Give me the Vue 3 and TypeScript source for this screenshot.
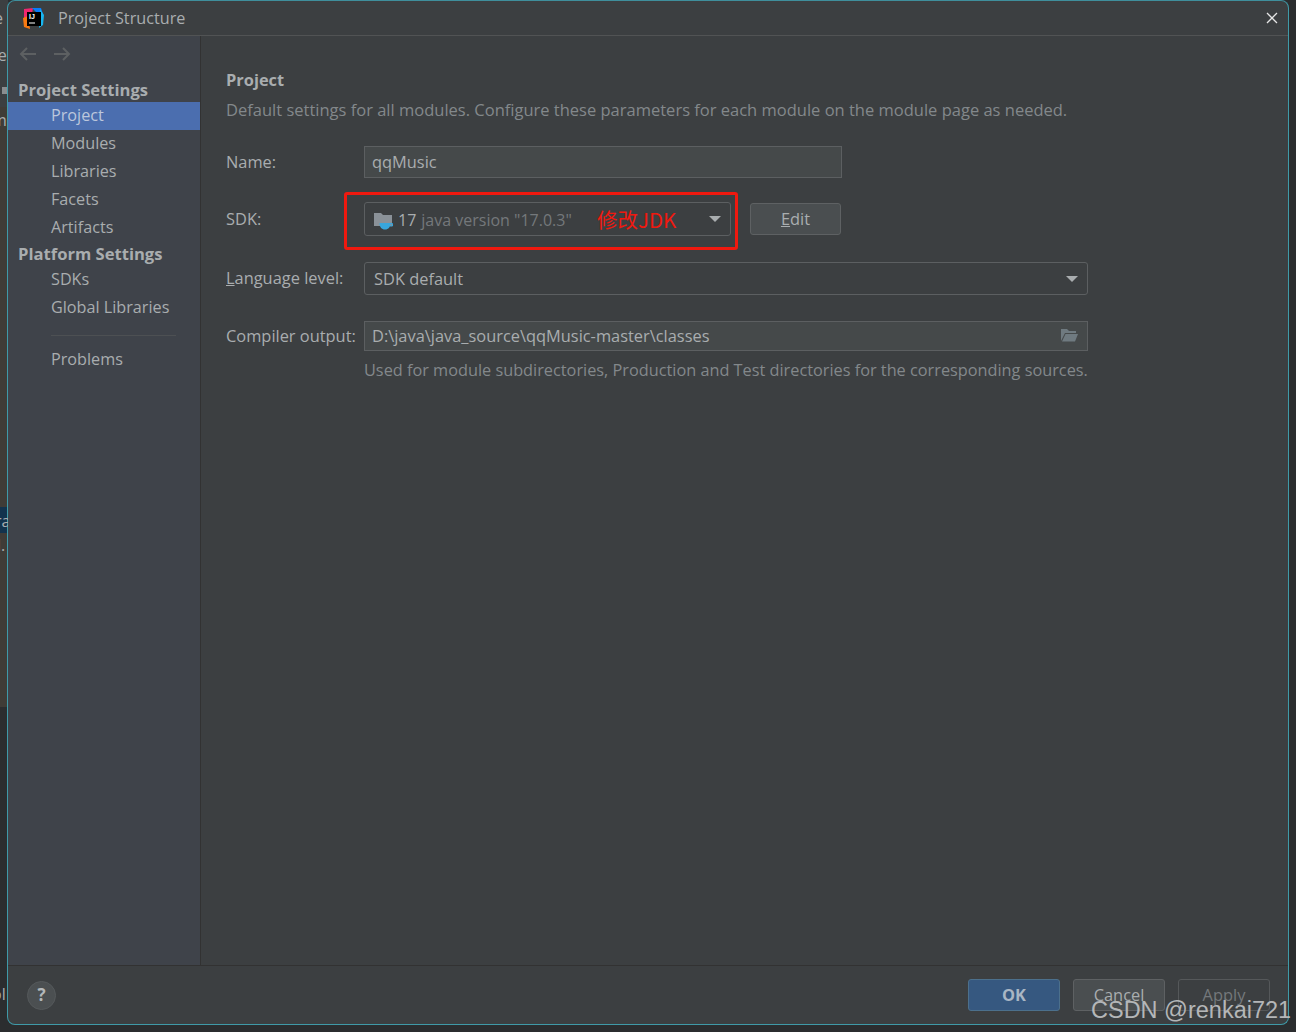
<script setup lang="ts">
interface NavRow {
  label: string
  kind: 'head' | 'item' | 'sep'
  active?: boolean
}

const nav: NavRow[] = [
  { label: 'Project Settings', kind: 'head' },
  { label: 'Project', kind: 'item', active: true },
  { label: 'Modules', kind: 'item' },
  { label: 'Libraries', kind: 'item' },
  { label: 'Facets', kind: 'item' },
  { label: 'Artifacts', kind: 'item' },
  { label: 'Platform Settings', kind: 'head' },
  { label: 'SDKs', kind: 'item' },
  { label: 'Global Libraries', kind: 'item' },
  { label: '', kind: 'sep' },
  { label: 'Problems', kind: 'item' },
]
</script>

<template>
  <div class="screen">
    <div class="backdrop">
      <i class="strip strip-base"></i>
      <i class="strip strip-brown"></i>
      <i class="strip strip-blue"></i>
      <i class="gear"></i>
      <span class="bit bit-a">e</span>
      <span class="bit bit-b">te</span>
      <span class="bit bit-c">m</span>
      <span class="bit bit-d">ra</span>
      <span class="bit bit-e">l.</span>
      <span class="bit bit-f">ol</span>
    </div>

    <div class="window">
      <header class="titlebar">
        <svg class="logo" width="24" height="24" viewBox="0 0 24 24">
          <path d="M3 3 L12 2 L9 20 L3 18 Z" fill="#f0266f" />
          <path d="M2 12 L7 10 L9 23 L3 21 Z" fill="#f97a12" />
          <path d="M11 2 L20 2 L22 8 L19 10 Z" fill="#087cfa" />
          <path d="M19 3 L23 9 L22 19 L18 22 Z" fill="#18b6f0" />
          <rect x="6" y="6" width="14" height="14" fill="#000" />
          <text x="8" y="13" class="logo-text">IJ</text>
          <rect x="8" y="16.500" width="6" height="1" fill="#fff" />
        </svg>
        <span class="title">Project Structure</span>
        <svg class="close" width="12" height="12" viewBox="0 0 12 12">
          <path d="M1 1 L11 11 M11 1 L1 11" stroke="#e6e6e6" stroke-width="1.3" fill="none" />
        </svg>
      </header>

      <div class="body">
        <aside class="sidebar">
          <div class="arrows">
            <svg width="18" height="14" viewBox="0 0 18 14">
              <path d="M17 7 H2 M8 1 L2 7 L8 13" stroke="#5d6062" stroke-width="2" fill="none" />
            </svg>
            <svg width="18" height="14" viewBox="0 0 18 14">
              <path d="M1 7 H16 M10 1 L16 7 L10 13" stroke="#5d6062" stroke-width="2" fill="none" />
            </svg>
          </div>
          <nav class="nav">
            <template v-for="row in nav" :key="row.label">
              <div v-if="row.kind === 'head'" class="nav-head">{{ row.label }}</div>
              <div v-else-if="row.kind === 'sep'" class="nav-sep"></div>
              <div v-else class="nav-item" :class="{ active: row.active }">{{ row.label }}</div>
            </template>
          </nav>
        </aside>

        <main class="content">
          <h1 class="heading">Project</h1>
          <p class="desc">Default settings for all modules. Configure these parameters for each module on the module page as needed.</p>

          <div class="form">
            <label class="lbl">Name:</label>
            <div class="field name-field">qqMusic</div>

            <label class="lbl lbl-up">SDK:</label>
            <div class="sdk-row">
              <div class="sdk-mark">
                <div class="combo sdk-combo">
                  <svg class="jdk-icon" width="20" height="20" viewBox="0 0 20 20">
                    <path d="M1 3 H8 L10 5 H19 V16 H1 Z" fill="#8a9198" />
                    <path d="M6.500 13 H17.500 C17.500 17 15.500 19.500 12 19.500 C8.500 19.500 6.500 17 6.500 13 Z" fill="#38a6dc" />
                    <path d="M17 13.500 H19.500 V16 H16.500" stroke="#38a6dc" stroke-width="1" fill="none" />
                  </svg>
                  <span class="sdk-num">17</span>
                  <span class="sdk-ver">java version "17.0.3"</span>
                  <i class="caret"></i>
                </div>
                <span class="note">修改JDK</span>
              </div>
              <button class="btn edit-btn"><u>E</u>dit</button>
            </div>

            <label class="lbl lbl-up"><u>L</u>anguage level:</label>
            <div class="combo lang-combo">
              <span>SDK default</span>
              <i class="caret"></i>
            </div>

            <label class="lbl lbl-top">Compiler output:</label>
            <div>
              <div class="field out-field">
                <span>D:\java\java_source\qqMusic-master\classes</span>
                <svg width="18" height="14" viewBox="0 0 18 14">
                  <path d="M1 13 V1 H7 L9 3 H16 V5 H5 L1 13 Z" fill="#6f7a80" />
                  <path d="M5.500 6 H18 L15 13.500 H2 Z" fill="#6f7a80" />
                </svg>
              </div>
              <p class="hint">Used for module subdirectories, Production and Test directories for the corresponding sources.</p>
            </div>
          </div>
        </main>
      </div>

      <footer class="footer">
        <div class="help">?</div>
        <div class="actions">
          <button class="btn ok-btn">OK</button>
          <button class="btn">Cancel</button>
          <button class="btn apply-btn">Apply</button>
        </div>
      </footer>
    </div>

    <span class="watermark">CSDN @renkai721</span>
  </div>
</template>

<style>
html, body {
  margin: 0;
  background: #2b2d2f;
}
</style>

<style scoped>
.screen {
  position: relative;
  width: 1296px;
  height: 1032px;
  overflow: hidden;
  background: #2b2d2f;
  font-family: "Open Sans", "Noto Sans", sans-serif;
  font-size: 16px;
  color: #b4b8ba;
}
.backdrop {
  position: absolute;
  left: 0;
  top: 0;
  width: 1296px;
  height: 1032px;
  color: #a8acae;
}
.bit {
  position: absolute;
  z-index: 1;
  font-size: 16px;
  line-height: 20px;
  overflow: hidden;
  white-space: nowrap;
}
.bit-a { top: 8px; left: -6px; width: 14px; }
.bit-b { top: 45px; left: -8px; width: 16px; }
.bit-c { top: 110px; left: -8px; width: 16px; }
.bit-d { top: 511px; left: -5px; width: 13px; }
.bit-e { top: 535px; left: -3px; width: 11px; }
.bit-f { top: 984px; left: -8px; width: 16px; }
.strip {
  position: absolute;
  left: 0;
  width: 8px;
}
.strip-base {
  top: 0;
  height: 707px;
  background: #3c3f41;
}
.strip-brown {
  top: 107px;
  height: 600px;
  background: #3f3c37;
}
.strip-blue {
  top: 507px;
  height: 26px;
  background: #13334d;
}
.gear {
  position: absolute;
  z-index: 1;
  left: 2px;
  top: 87px;
  width: 5px;
  height: 7px;
  background: #8a8d8f;
}
.window {
  position: relative;
  display: flex;
  flex-direction: column;
  box-sizing: border-box;
  width: 1282px;
  height: 1025px;
  margin-left: 7px;
  border: 1px solid #3f9aa8;
  border-top-color: #3f8f9c;
  border-radius: 8px;
  background: #3c3f41;
  overflow: hidden;
}
.titlebar {
  display: flex;
  align-items: center;
  flex: none;
  height: 34px;
  padding: 0 10px 0 13px;
  border-bottom: 1px solid #515354;
}
.logo {
  flex: none;
}
.logo-text {
  font-family: "Liberation Sans", sans-serif;
  font-size: 7px;
  font-weight: 700;
  fill: #fff;
}
.title {
  margin-left: 13px;
  flex: 1;
  font-size: 16.2px;
  color: #a9adaf;
}
.close {
  flex: none;
}
.body {
  display: flex;
  flex: 1;
  min-height: 0;
}
.sidebar {
  flex: none;
  box-sizing: border-box;
  width: 193px;
  background: #3f434a;
  border-right: 1px solid #323232;
}
.arrows {
  display: flex;
  gap: 16px;
  height: 42px;
  padding: 11px 0 0 11px;
  box-sizing: border-box;
}
.nav {
  display: flex;
  flex-direction: column;
}
.nav-head {
  height: 24px;
  padding-left: 10px;
  font-size: 16.6px;
  font-weight: 700;
  line-height: 23px;
  color: #a9adaf;
  white-space: nowrap;
}
.nav-item {
  height: 28px;
  padding-left: 43px;
  font-size: 16.2px;
  line-height: 27px;
  color: #a9adaf;
}
.nav-item.active {
  background: #4b6eaf;
  color: #bcc7dc;
}
.nav-sep {
  height: 1px;
  margin: 13px 24px 10px 43px;
  background: #4d5053;
}
.content {
  flex: 1;
  padding: 33px 0 0 25px;
  min-width: 0;
  font-size: 16.4px;
}
.heading {
  margin: 0;
  font-size: 16.4px;
  font-weight: 700;
  line-height: 22px;
  color: #a9adaf;
}
.desc {
  margin: 8px 0 0;
  font-size: 16.5px;
  line-height: 22px;
  color: #83888b;
  white-space: nowrap;
}
.form {
  display: grid;
  grid-template-columns: 138px 724px;
  grid-template-rows: 32px 36px 35px auto;
  row-gap: 24px;
  margin-top: 25px;
}
.lbl {
  align-self: center;
  line-height: 30px;
  color: #a9adaf;
  white-space: nowrap;
}
.lbl-up {
  margin-bottom: 3px;
}
.lbl-top {
  align-self: start;
}
.field {
  box-sizing: border-box;
  display: flex;
  align-items: center;
  border: 1px solid #5c5f61;
  background: #45494a;
  padding: 0 7px 2px;
  color: #a9adaf;
}
.name-field {
  width: 478px;
  height: 32px;
}
.sdk-row {
  display: flex;
  align-items: flex-start;
  gap: 19px;
}
.sdk-mark {
  position: relative;
}
.sdk-mark::before {
  content: "";
  position: absolute;
  left: -20px;
  top: -10px;
  width: 394px;
  height: 58px;
  box-sizing: border-box;
  border: 3px solid #f0190f;
  border-radius: 3px;
}
.combo {
  box-sizing: border-box;
  display: flex;
  align-items: center;
  border: 1px solid #5c5f61;
  border-radius: 3px;
  background: #3c3f41;
  position: relative;
}
.sdk-combo {
  width: 367px;
  height: 34px;
  padding: 1px 0 0 8px;
}
.jdk-icon {
  flex: none;
}
.sdk-num {
  margin-left: 5px;
  font-size: 16px;
  color: #a9adaf;
}
.sdk-ver {
  margin-left: 5px;
  font-size: 16px;
  color: #74787b;
}
.caret {
  position: absolute;
  right: 9px;
  top: 50%;
  margin-top: -3px;
  width: 0;
  height: 0;
  border-left: 6px solid transparent;
  border-right: 6px solid transparent;
  border-top: 6px solid #a9adaf;
}
.note {
  position: absolute;
  left: 233px;
  top: 1px;
  font-family: "Noto Sans CJK SC", "Liberation Sans", sans-serif;
  font-size: 20.500px;
  line-height: 32px;
  color: #f0190f;
  white-space: nowrap;
}
.btn {
  box-sizing: border-box;
  width: 92px;
  height: 32px;
  border: 1px solid #5e6163;
  border-radius: 3px;
  background: #4a4e50;
  color: #a9adaf;
  font-family: inherit;
  font-size: 16.4px;
  padding: 0 0 2px;
}
.edit-btn {
  flex: none;
  width: 91px;
  margin-top: 1px;
}
.lang-combo {
  width: 724px;
  height: 33px;
  padding-left: 9px;
  color: #a9adaf;
}
.out-field {
  justify-content: space-between;
  width: 724px;
  height: 30px;
  padding-right: 9px;
}
.hint {
  margin: 8px 0 0;
  font-size: 16.3px;
  line-height: 22px;
  color: #83888b;
  white-space: nowrap;
}
.footer {
  display: flex;
  flex: none;
  align-items: center;
  justify-content: space-between;
  height: 58px;
  padding: 0 18px 0 19px;
  border-top: 1px solid #323232;
}
.help {
  width: 29px;
  height: 29px;
  border-radius: 50%;
  background: #4b4f51;
  border: 1px solid #55595b;
  box-sizing: border-box;
  text-align: center;
  font-size: 17px;
  font-weight: 700;
  line-height: 26px;
  color: #b4b8ba;
}
.actions {
  display: flex;
  gap: 13px;
}
.ok-btn {
  background: #365880;
  border-color: #4c708c;
  color: #a9b6c4;
  font-weight: 700;
}
.apply-btn {
  background: #3c3f41;
  border-color: #55585a;
  color: #74787b;
}
.watermark {
  position: absolute;
  left: 1091px;
  top: 995px;
  font-family: "Liberation Sans", sans-serif;
  font-size: 23.5px;
  line-height: 30px;
  color: #b4b6b8;
  white-space: nowrap;
}
</style>
